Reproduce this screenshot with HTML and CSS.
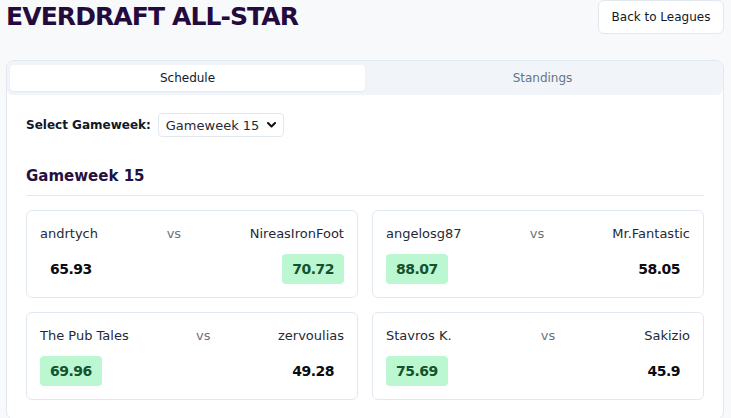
FILE: index.html
```html
<!DOCTYPE html>
<html lang="en">
<head>
<meta charset="utf-8">
<title>EVERDRAFT ALL-STAR</title>
<link rel="stylesheet" href="styles.css">
</head>
<body>
<header class="page-header">
  <h1 class="league-title">EVERDRAFT ALL-STAR</h1>
  <button class="back-btn" type="button">Back to Leagues</button>
</header>

<section class="tabs-card">
  <div class="tab-list">
    <div class="tab tab-active">Schedule</div>
    <div class="tab">Standings</div>
  </div>
  <div class="tab-content">
    <div class="select-row">
      <label class="select-label" for="gw">Select Gameweek:</label>
      <div class="select-box">
        <select id="gw" class="gw-select">
          <option>Gameweek 15</option>
        </select>
        <svg class="chev" width="9" height="6" viewBox="0 0 9 6"><path d="M1 1l3.5 3.5L8 1" fill="none" stroke="#111" stroke-width="2" stroke-linecap="round" stroke-linejoin="round"/></svg>
      </div>
    </div>

    <h2 class="gw-heading">Gameweek 15</h2>

    <div class="match-grid">
      <div class="match">
        <div class="names"><span class="name">andrtych</span><span class="vs">vs</span><span class="name">NireasIronFoot</span></div>
        <div class="scores"><span class="score">65.93</span><span class="score win">70.72</span></div>
      </div>
      <div class="match">
        <div class="names"><span class="name">angelosg87</span><span class="vs">vs</span><span class="name">Mr.Fantastic</span></div>
        <div class="scores"><span class="score win">88.07</span><span class="score">58.05</span></div>
      </div>
      <div class="match">
        <div class="names"><span class="name">The Pub Tales</span><span class="vs">vs</span><span class="name">zervoulias</span></div>
        <div class="scores"><span class="score win">69.96</span><span class="score">49.28</span></div>
      </div>
      <div class="match">
        <div class="names"><span class="name">Stavros K.</span><span class="vs">vs</span><span class="name">Sakizio</span></div>
        <div class="scores"><span class="score win">75.69</span><span class="score">45.9</span></div>
      </div>
    </div>
  </div>
</section>
</body>
</html>
```

FILE: styles.css
```css
* { box-sizing: border-box; }

html, body {
  margin: 0;
  background: #f8f9fb;
}

body {
  padding: 0 7px 0 6px;
  font-family: "DejaVu Sans", "Noto Sans", sans-serif;
  color: #1f2937;
  overflow: hidden;
  height: 418px;
}

.page-header {
  display: flex;
  justify-content: space-between;
  align-items: center;
  height: 34px;
}

.league-title {
  margin: 0;
  font-size: 25px;
  font-weight: 700;
  letter-spacing: -0.9px;
  line-height: 30px;
  color: #230b3d;
}

.back-btn {
  height: 34px;
  width: 126px;
  padding: 0;
  background: #ffffff;
  border: 1px solid #e2e8f0;
  border-radius: 6px;
  font-family: inherit;
  font-size: 12px;
  color: #111827;
  cursor: pointer;
}

.tabs-card {
  margin-top: 26px;
  background: #ffffff;
  border: 1px solid #e2e8f0;
  border-radius: 8px;
  overflow: hidden;
}

.tab-list {
  display: grid;
  grid-template-columns: 1fr 1fr;
  padding: 4px 3px;
  background: #f1f4f8;
  border-radius: 0 0 6px 6px;
}

.tab {
  height: 26px;
  display: flex;
  align-items: center;
  justify-content: center;
  font-size: 12px;
  color: #64748b;
  border-radius: 4px;
}

.tab-active {
  background: #ffffff;
  color: #111827;
  box-shadow: 0 1px 2px rgba(15, 23, 42, 0.06);
}

.tab-content {
  padding: 18px 19px 19px;
}

.select-row {
  display: flex;
  align-items: center;
  gap: 7px;
}

.select-label {
  font-size: 12px;
  font-weight: 700;
  letter-spacing: 0;
  color: #111827;
}

.select-box {
  display: flex;
  align-items: center;
  height: 24px;
  width: 126px;
  padding: 0 7px 0 7px;
  border: 1px solid #e2e8f0;
  border-radius: 4px;
  background: #ffffff;
}

.gw-select {
  flex: 1;
  appearance: none;
  -webkit-appearance: none;
  border: 0;
  background: transparent;
  padding: 0;
  font-family: inherit;
  font-size: 13px;
  color: #1f2937;
  outline: none;
}

.chev { flex: none; }

.gw-heading {
  margin: 29px 0 0;
  padding-bottom: 9px;
  border-bottom: 1px solid #e2e8f0;
  font-size: 15px;
  line-height: 20px;
  font-weight: 700;
  color: #241042;
}

.match-grid {
  margin-top: 14px;
  display: grid;
  grid-template-columns: 1fr 1fr;
  gap: 14px;
}

.match {
  border: 1px solid #e2e8f0;
  border-radius: 6px;
  padding: 13px 13px 13px;
  background: #ffffff;
}

.names {
  display: flex;
  justify-content: space-between;
  align-items: center;
  height: 18px;
  font-size: 13px;
}

.name { color: #1f2937; }

.vs { color: #6b7280; }

.scores {
  margin-top: 12px;
  display: flex;
  justify-content: space-between;
}

.score {
  padding: 5px 10px;
  line-height: 20px;
  font-size: 14px;
  font-weight: 700;
  letter-spacing: -0.5px;
  color: #0b0b12;
  border-radius: 4px;
}

.score.win {
  background: #bbf7d0;
  color: #14532d;
}
```
